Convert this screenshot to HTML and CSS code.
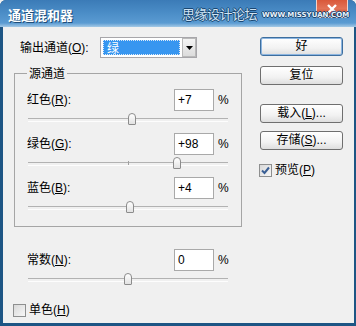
FILE: index.html
```html
<!DOCTYPE html>
<html lang="zh-CN">
  <head>
    <meta charset="UTF-8" />
    <title>通道混和器</title>
    <link rel="stylesheet" href="styles.css">
  </head>
  <body>
    <div class="dialog">
      <div class="titlebar">
        <span class="title">通道混和器</span>
        <span class="close">
          <svg width="12" height="10" viewBox="0 0 12 10"><path d="M2 1 L10 9 M10 1 L2 9" stroke="#fff" stroke-width="2.4" fill="none"/></svg>
        </span>
        <!-- forum watermark sits over the bar -->
        <div class="watermark">
          <span class="wm-cn">思缘设计论坛</span>
          <span class="wm-url">WWW.MISSYUAN.COM</span>
        </div>
      </div>

      <div class="content">
        <div class="main">
          <div class="output-row">
            <label>输出通道(<u>O</u>):</label>
            <div class="select">
              <span class="select-field">绿</span>
              <span class="select-btn">
                <svg width="7" height="4" viewBox="0 0 7 4"><path d="M0 0 H7 L3.5 4 Z" fill="#000"/></svg>
              </span>
            </div>
          </div>

          <fieldset class="group">
            <legend>源通道</legend>
            <div class="channel">
              <div class="channel-head">
                <label>红色(<u>R</u>):</label>
                <input class="num" type="text" value="+7" />
                <span class="pct">%</span>
              </div>
              <div class="slider"><span class="tick"></span><span class="thumb" style="left: 99.5px"></span></div>
            </div>
            <div class="channel">
              <div class="channel-head">
                <label>绿色(<u>G</u>):</label>
                <input class="num" type="text" value="+98" />
                <span class="pct">%</span>
              </div>
              <div class="slider"><span class="tick"></span><span class="thumb" style="left: 145px"></span></div>
            </div>
            <div class="channel">
              <div class="channel-head">
                <label>蓝色(<u>B</u>):</label>
                <input class="num" type="text" value="+4" />
                <span class="pct">%</span>
              </div>
              <div class="slider"><span class="tick"></span><span class="thumb" style="left: 98px"></span></div>
            </div>
          </fieldset>

          <div class="channel constant">
            <div class="channel-head">
              <label>常数(<u>N</u>):</label>
              <input class="num" type="text" value="0" />
              <span class="pct">%</span>
            </div>
            <div class="slider"><span class="tick"></span><span class="thumb" style="left: 96px"></span></div>
          </div>

          <label class="check mono"><span class="box"></span><span>单色(<u>H</u>)</span></label>
        </div>

        <div class="side">
          <button type="button" class="btn default">好</button>
          <button type="button" class="btn reset">复位</button>
          <button type="button" class="btn load">载入(<u>L</u>)...</button>
          <button type="button" class="btn save">存储(<u>S</u>)...</button>
          <label class="check preview">
            <span class="box">
              <svg width="11" height="11" viewBox="0 0 11 11"><path d="M2 5.5 L4.5 8 L9 2.5" stroke="#3a5f95" stroke-width="2" fill="none"/></svg>
            </span>
            <span>预览(<u>P</u>)</span>
          </label>
        </div>
      </div>
    </div>
  </body>
</html>
```

FILE: styles.css
```css
* {
  margin: 0;
  padding: 0;
  box-sizing: border-box;
}
body {
  width: 356px;
  height: 326px;
  overflow: hidden;
  font-family: "Liberation Sans", "Noto Sans CJK SC", sans-serif;
  font-size: 12px;
  color: #000;
  background: #f0f0f0;
}
u {
  text-decoration: underline;
}

.dialog {
  width: 356px;
  height: 326px;
  display: flex;
  flex-direction: column;
  background: #1d5584;
  border-radius: 6px 6px 0 0;
  overflow: hidden;
}

/* title bar */
.titlebar {
  position: relative;
  height: 27px;
  display: flex;
  align-items: flex-start;
  padding-left: 8px;
  background: linear-gradient(#3b7bb7, #4a8cc6 45%, #5a9bd2 85%, #a4c9e6);
}
.title {
  margin-top: 6px;
  font-family: "Noto Sans CJK SC", sans-serif;
  font-size: 13px;
  font-weight: bold;
  line-height: 17px;
  color: #fff;
  text-shadow: 1px 1px 0 #1f4d78;
}
.close {
  margin-left: auto;
  margin-right: 8px;
  width: 32px;
  height: 18px;
  display: flex;
  align-items: center;
  justify-content: center;
  border: 1px solid #f3d2c8;
  border-top: none;
  border-radius: 0 0 4px 4px;
  background: linear-gradient(#d9583a, #e27357 50%, #c43e1f);
}
.watermark {
  position: absolute;
  left: 182px;
  top: 5px;
  display: flex;
  align-items: center;
  gap: 5px;
}
.wm-cn {
  font-family: "Noto Sans CJK SC", sans-serif;
  font-size: 13px;
  line-height: 17px;
  letter-spacing: -0.5px;
  color: #cfe3f4;
  text-shadow: -1px 0 #1a4772, 1px 0 #1a4772, 0 -1px #1a4772, 0 1px #1a4772;
}
.wm-url {
  margin-top: 3px;
  font-family: "DejaVu Sans", sans-serif;
  font-size: 7px;
  font-weight: bold;
  line-height: 9px;
  color: #e8f2fa;
  text-shadow: -1px 0 #1a4772, 1px 0 #1a4772, 0 -1px #1a4772, 0 1px #1a4772;
}

/* body */
.content {
  flex: 1;
  display: flex;
  margin: 0 2px 3px 3px;
  background: #f0f0f0;
}
.main {
  width: 239px;
  padding: 10px 0 0 11px;
  display: flex;
  flex-direction: column;
}

.output-row {
  display: flex;
  align-items: center;
  height: 21px;
  padding-left: 6px;
}
.output-row label {
  width: 80px;
}
.output-row label,
.channel-head label,
.check {
  line-height: 14px;
}
.select {
  width: 97px;
  height: 21px;
  display: flex;
  align-items: center;
  border: 1px solid #a7a6aa;
  background: #fff;
  padding: 0 0 0 2px;
}
.select-field {
  width: 77px;
  height: 15px;
  padding-left: 3px;
  line-height: 13px;
  color: #fff;
  background: #3796f0;
  border: 1px dotted #dce9f7;
  font-family: "Noto Sans CJK SC", sans-serif;
}
.select-btn {
  margin-left: auto;
  width: 14px;
  height: 19px;
  display: flex;
  align-items: center;
  justify-content: center;
  border: 1px solid #b9b9b9;
  background: linear-gradient(#f4f4f4, #dcdcdc);
}

/* source channels */
.group {
  width: 228px;
  margin-top: 7px;
  border: 1px solid #a5a5a5;
  padding: 8px 12px 13px 12px;
}
.group legend {
  padding: 0 2px;
  line-height: 16px;
  font-family: "Noto Sans CJK SC", sans-serif;
}
.channel + .channel {
  margin-top: 8px;
}
.channel-head {
  display: flex;
  align-items: center;
  height: 22px;
}
.channel-head label {
  width: 147px;
}
.num {
  width: 40px;
  height: 22px;
  padding: 0 3px;
  border: 1px solid #a9a9a9;
  background: #fff;
  font-family: "Liberation Sans", sans-serif;
  font-size: 12px;
  outline: none;
}
.pct {
  margin-left: 4px;
}

.slider {
  position: relative;
  width: 200px;
  height: 12px;
  margin: 2px 0 0 1px;
}
.slider::before {
  content: "";
  position: absolute;
  left: 0;
  right: 0;
  top: 5px;
  height: 2px;
  border-top: 1px solid #b2b2b2;
  border-bottom: 1px solid #fdfdfd;
}
.tick {
  position: absolute;
  left: 100px;
  top: 4px;
  width: 1px;
  height: 4px;
  background: #a0a0a0;
}
.thumb {
  position: absolute;
  top: 0;
  width: 8px;
  height: 12px;
  border: 1px solid #8c8c8c;
  border-radius: 4px 4px 1px 1px;
  background: linear-gradient(#ffffff, #e2e2e2);
}

.constant {
  margin: 22px 0 0 13px;
}

/* check boxes */
.check {
  display: flex;
  align-items: center;
  gap: 3px;
}
.box {
  width: 13px;
  height: 13px;
  display: flex;
  align-items: center;
  justify-content: center;
  border: 1px solid #8e8f8f;
  background: linear-gradient(135deg, #d9d9d9, #f7f7f7);
}
.mono {
  margin: 18px 0 0 -1px;
}

/* buttons column */
.side {
  flex: 1;
  padding: 10px 0 0 18px;
  display: flex;
  flex-direction: column;
}
.btn {
  width: 83px;
  height: 19px;
  border: 1px solid #6f6f6f;
  border-radius: 3px;
  background: linear-gradient(#ffffff, #f2f2f2 60%, #dedede);
  font-family: "Liberation Sans", "Noto Sans CJK SC", sans-serif;
  font-size: 12px;
  line-height: 15px;
  color: #000;
}
.btn.default {
  border-color: #3d6e9e;
  box-shadow: inset 0 0 0 1px #8cb5e0;
}
.reset {
  margin-top: 10px;
}
.load {
  margin-top: 19px;
}
.save {
  margin-top: 8px;
}
.preview {
  margin-top: 13px;
  margin-left: -1px;
}
```
